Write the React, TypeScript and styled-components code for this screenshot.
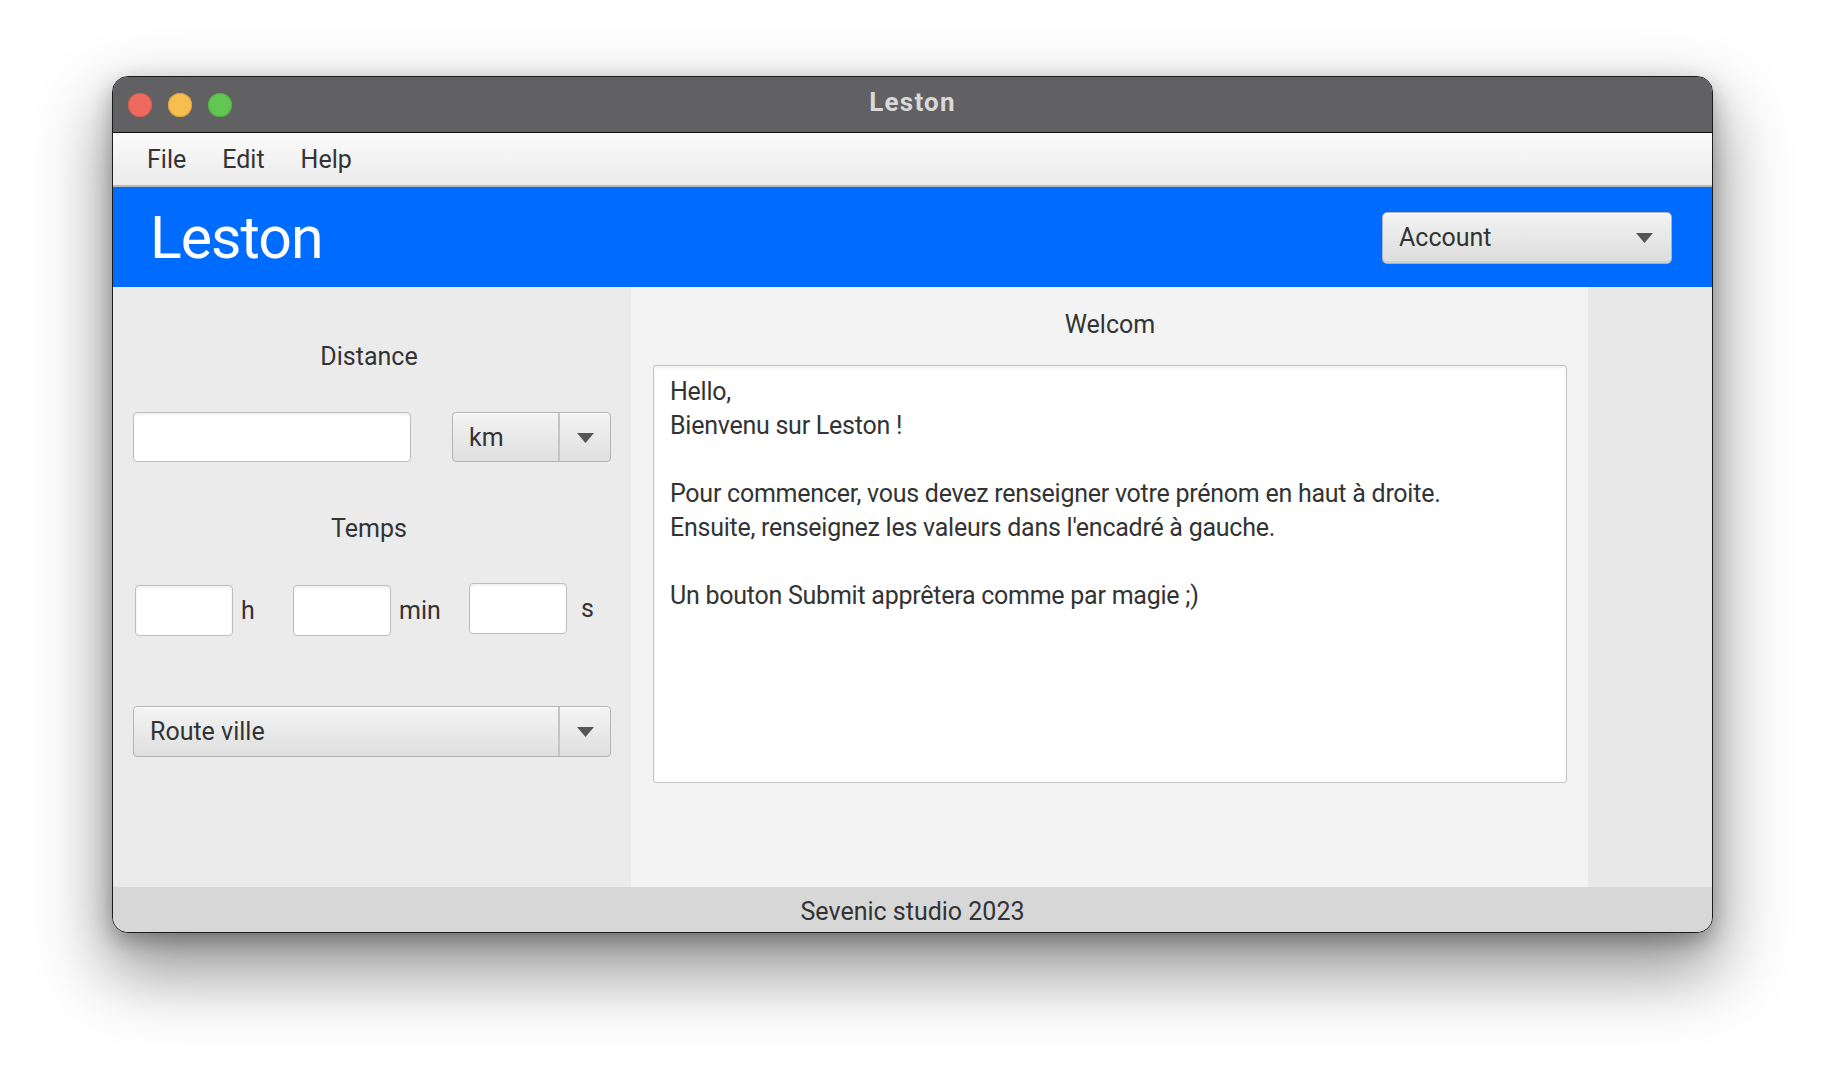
import React from "react";
import styled, { createGlobalStyle } from "styled-components";

const GlobalStyle = createGlobalStyle`
  html, body {
    margin: 0;
    padding: 0;
    background: #ffffff;
  }
  body {
    font-family: Roboto, "Liberation Sans", sans-serif;
    color: #333333;
    width: 1824px;
    height: 1080px;
    overflow: hidden;
  }
  *, *::before, *::after {
    box-sizing: border-box;
  }
`;

const Stage = styled.div`
  padding: 76px 0 0 112px;
`;

const Window = styled.div`
  width: 1601px;
  height: 857px;
  border: 1px solid #1c1c1c;
  border-radius: 16px;
  overflow: hidden;
  display: flex;
  flex-direction: column;
  background: #ebebeb;
  box-shadow: 0 34px 70px 6px rgba(0, 0, 0, 0.42), 0 8px 22px rgba(0, 0, 0, 0.28);
`;

const TitleBar = styled.div`
  height: 56px;
  flex: none;
  background: #616163;
  border-bottom: 1px solid #0e0e0e;
  display: grid;
  grid-template-columns: 1fr auto 1fr;
  align-items: start;
  padding: 0 15px;
`;

const Lights = styled.div`
  display: flex;
  gap: 16px;
  align-self: center;
`;

const Light = styled.span<{ $c: string; $b: string }>`
  width: 24px;
  height: 24px;
  border-radius: 50%;
  background: ${(p) => p.$c};
  box-shadow: inset 0 0 0 1px ${(p) => p.$b};
`;

const TitleText = styled.div`
  font-size: 26px;
  font-weight: 700;
  letter-spacing: 1.2px;
  line-height: 51px;
  color: #d9d9d9;
`;

const MenuBar = styled.div`
  height: 54px;
  flex: none;
  display: flex;
  padding: 2px 0 0 16px;
  background: linear-gradient(to bottom, #fbfbfb, #ebebeb);
  border-bottom: 2px solid #b9b9b9;
`;

const MenuItem = styled.div`
  font-size: 25px;
  line-height: 50px;
  padding: 0 18px;
  color: #333;
`;

const Header = styled.div`
  height: 100px;
  flex: none;
  background: #006cff;
  display: flex;
  align-items: center;
  justify-content: space-between;
  padding: 0 40px 0 37px;
`;

const Brand = styled.div`
  font-size: 59px;
  letter-spacing: -1px;
  line-height: 72px;
  color: #ffffff;
  margin-top: 1px;
`;

const ArrowIcon = () => (
  <svg width="17" height="10" viewBox="0 0 17 10">
    <polygon points="0,0 17,0 8.5,10" fill="#555555" />
  </svg>
);

const AccountCombo = styled.div`
  width: 290px;
  height: 52px;
  border: 1px solid #aab2c4;
  border-radius: 5px;
  background: linear-gradient(to bottom, #f3f3f3, #dcdcdc);
  box-shadow: inset 0 1px 0 #ffffff, inset 0 -2px 0 #cfcfcf;
  display: flex;
  align-items: center;
  justify-content: space-between;
  padding: 0 18px 0 16px;
  font-size: 25px;
  color: #333;
  margin-top: 1px;
`;

const Main = styled.div`
  height: 600px;
  flex: none;
  display: grid;
  grid-template-columns: 518px 957px 1fr;
`;

const LeftPanel = styled.div`
  background: #ebebeb;
  padding: 55px 20px 0;
  display: flex;
  flex-direction: column;
`;

const SectionLabel = styled.div<{ $mt?: number }>`
  font-size: 25px;
  line-height: 30px;
  text-align: center;
  padding-right: 6px;
  margin-top: ${(p) => p.$mt ?? 0}px;
`;

const DistanceRow = styled.div`
  margin-top: 40px;
  display: flex;
  justify-content: space-between;
`;

const TextField = styled.div<{ $w: number; $h?: number }>`
  width: ${(p) => p.$w}px;
  height: ${(p) => p.$h ?? 50}px;
  background: #ffffff;
  border: 1px solid #bdbdbd;
  border-radius: 4px;
  box-shadow: inset 0 2px 3px rgba(0, 0, 0, 0.06);
  flex: none;
`;

const SplitCombo = styled.div<{ $w: number; $h: number; $mt?: number }>`
  width: ${(p) => p.$w}px;
  height: ${(p) => p.$h}px;
  margin-top: ${(p) => p.$mt ?? 0}px;
  border: 1px solid #b3b3b3;
  border-radius: 4px;
  background: linear-gradient(to bottom, #f4f4f4, #dfdfdf);
  box-shadow: inset 0 1px 0 #ffffff;
  display: grid;
  grid-template-columns: 1fr 50px;
  font-size: 25px;
  color: #333;
`;

const ComboValue = styled.div`
  display: flex;
  align-items: center;
  padding-left: 16px;
  border-right: 2px solid #c4c4c4;
`;

const ComboButton = styled.div`
  display: flex;
  align-items: center;
  justify-content: center;
  padding-top: 1px;
`;

const TimeRow = styled.div`
  margin-top: 39px;
  display: flex;
  align-items: flex-start;
  padding-left: 2px;
`;

const TimeGroup = styled.div<{ $w: number; $mt: number; $gap: number }>`
  width: ${(p) => p.$w}px;
  margin-top: ${(p) => p.$mt}px;
  display: flex;
  align-items: center;
  gap: ${(p) => p.$gap}px;
  flex: none;
`;

const UnitLabel = styled.span`
  font-size: 25px;
  line-height: 30px;
`;

const CenterPanel = styled.div`
  background: #f3f3f3;
  padding: 23px 21px 0 22px;
  display: flex;
  flex-direction: column;
`;

const PanelTitle = styled.div`
  font-size: 25px;
  line-height: 30px;
  text-align: center;
`;

const TextArea = styled.div`
  margin-top: 25px;
  height: 418px;
  background: #ffffff;
  border: 1px solid #c3c3c3;
  border-radius: 3px;
  box-shadow: inset 0 2px 3px rgba(0, 0, 0, 0.06);
  padding: 9px 16px;
  font-size: 25px;
  letter-spacing: -0.25px;
  line-height: 34px;
  white-space: pre-line;
  color: #333;
`;

const RightPanel = styled.div`
  background: #e8e8e8;
`;

const Footer = styled.div`
  flex: 1;
  background: #d7d7d7;
  text-align: center;
  font-size: 25px;
  line-height: 41px;
  padding-top: 4px;
  color: #333;
`;

const welcomeText = `Hello,
Bienvenu sur Leston !

Pour commencer, vous devez renseigner votre prénom en haut à droite.
Ensuite, renseignez les valeurs dans l'encadré à gauche.

Un bouton Submit apprêtera comme par magie ;)`;

export default function App() {
  return (
    <>
      <GlobalStyle />
      <Stage>
        <Window>
          <TitleBar>
            <Lights>
              <Light $c="#ee6a5f" $b="#d55a50" />
              <Light $c="#f5be4f" $b="#d9a53f" />
              <Light $c="#62c554" $b="#52ad46" />
            </Lights>
            <TitleText>Leston</TitleText>
            <div />
          </TitleBar>
          <MenuBar>
            <MenuItem>File</MenuItem>
            <MenuItem>Edit</MenuItem>
            <MenuItem>Help</MenuItem>
          </MenuBar>
          <Header>
            <Brand>Leston</Brand>
            <AccountCombo>
              <span>Account</span>
              <ArrowIcon />
            </AccountCombo>
          </Header>
          <Main>
            <LeftPanel>
              <SectionLabel>Distance</SectionLabel>
              <DistanceRow>
                <TextField $w={278} />
                <SplitCombo $w={159} $h={50}>
                  <ComboValue>km</ComboValue>
                  <ComboButton>
                    <ArrowIcon />
                  </ComboButton>
                </SplitCombo>
              </DistanceRow>
              <SectionLabel $mt={52}>Temps</SectionLabel>
              <TimeRow>
                <TimeGroup $w={158} $mt={2} $gap={8}>
                  <TextField $w={98} $h={51} />
                  <UnitLabel>h</UnitLabel>
                </TimeGroup>
                <TimeGroup $w={176} $mt={2} $gap={8}>
                  <TextField $w={98} $h={51} />
                  <UnitLabel>min</UnitLabel>
                </TimeGroup>
                <TimeGroup $w={140} $mt={0} $gap={14}>
                  <TextField $w={98} $h={51} />
                  <UnitLabel>s</UnitLabel>
                </TimeGroup>
              </TimeRow>
              <SplitCombo $w={478} $h={51} $mt={70}>
                <ComboValue>Route ville</ComboValue>
                <ComboButton>
                  <ArrowIcon />
                </ComboButton>
              </SplitCombo>
            </LeftPanel>
            <CenterPanel>
              <PanelTitle>Welcom</PanelTitle>
              <TextArea>{welcomeText}</TextArea>
            </CenterPanel>
            <RightPanel />
          </Main>
          <Footer>Sevenic studio 2023</Footer>
        </Window>
      </Stage>
    </>
  );
}
